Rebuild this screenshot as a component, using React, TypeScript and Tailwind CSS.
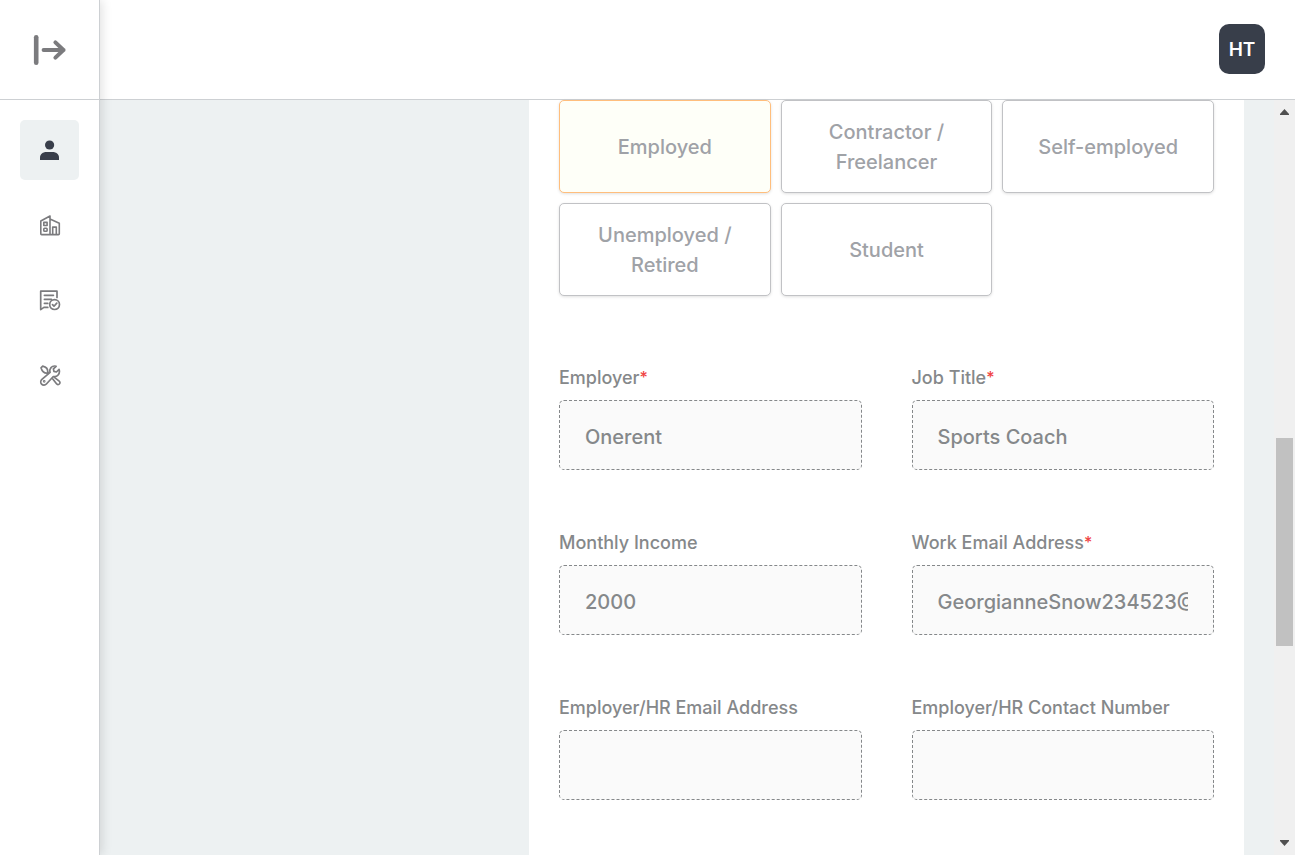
import { useState } from "react";
import type { ReactNode } from "react";

const statuses = ["Employed", "Contractor / Freelancer", "Self-employed", "Unemployed / Retired", "Student"];

const fields = [
  { id: "employer", label: "Employer", required: true, value: "Onerent", type: "text" },
  { id: "job-title", label: "Job Title", required: true, value: "Sports Coach", type: "text" },
  { id: "income", label: "Monthly Income", required: false, value: "2000", type: "text" },
  { id: "work-email", label: "Work Email Address", required: true, value: "GeorgianneSnow234523@", type: "text" },
  { id: "hr-email", label: "Employer/HR Email Address", required: false, value: "", type: "text" },
  { id: "hr-phone", label: "Employer/HR Contact Number", required: false, value: "", type: "tel" },
];

function ExpandIcon() {
  return (
    <svg width="34" height="32" viewBox="0 0 34 32" fill="none" stroke="#7b7b7e" strokeLinecap="round" strokeLinejoin="round" aria-hidden="true">
      <path d="M3.2 3.2v25.6" strokeWidth="4.6" />
      <path d="M10.6 16h20M22.4 8.4 30.4 16l-8 7.6" strokeWidth="4" />
    </svg>
  );
}

function PersonIcon() {
  return (
    <svg width="20" height="20" viewBox="0 0 20 20" fill="#383e4a" aria-hidden="true">
      <circle cx="9.6" cy="5" r="4.6" />
      <path d="M0 20v-2.5c0-3.5 3-5.6 6.3-5.6h6.4c3.3 0 6.3 2.1 6.3 5.6V20z" />
    </svg>
  );
}

function BuildingIcon() {
  return (
    <svg width="22" height="22" viewBox="0 0 22 22" fill="none" stroke="#7b7b7e" strokeWidth="1.6" strokeLinejoin="round" aria-hidden="true">
      <path d="M2.6 20.6a.8.8 0 0 1-.8-.8V7L11 2v18.6zM11 5l9.3 4.2v10.6a.8.8 0 0 1-.8.8H11" />
      <rect x="4.8" y="8.4" width="3.3" height="3.1" />
      <rect x="4.8" y="14.2" width="3.3" height="3.1" rx=".8" />
      <path d="M13.7 20.4v-7.3h3.6v7.3" />
    </svg>
  );
}

function ReceiptIcon() {
  return (
    <svg width="22" height="22" viewBox="0 0 22 22" fill="none" stroke="#7b7b7e" strokeWidth="1.7" strokeLinecap="round" strokeLinejoin="round" aria-hidden="true">
      <path d="M18 8.4V2.2H1.7v18.4L4.9 18.4h3.9" />
      <path d="M5.4 6.3h9M5.4 10.3h7M5.4 14.3h3.4" />
      <circle cx="15.6" cy="15.6" r="4.9" />
      <path d="m13.5 15.7 1.5 1.5 2.8-3.1" />
    </svg>
  );
}

function ToolsIcon() {
  return (
    <svg width="22" height="22" viewBox="0 0 22 22" fill="none" stroke="#7b7b7e" strokeWidth="1.7" strokeLinecap="round" strokeLinejoin="round" aria-hidden="true">
      <path d="M20.1 5.4 17.4 8l-2.5-.6-.5-2.5 2.7-2.6c-2.4-.8-5.1.4-6 2.8-.5 1.2-.3 2.3 0 3.3L2.9 15.4c-1.4 1.3-1.5 3.4-.3 4.7 1.3 1.4 3.5 1.3 4.8-.1l6.9-7.5c3.7 1 7.2-2.6 5.8-7.1z" />
      <path d="M8.6 9.8 8 9.2C5.4 9.3 3 7.1 2 3.8L3.7 2.2c3.3.8 5.2 3 5 5.6l.5.6M13.6 14.8l3.9 5c.8 1 2.1 1 2.9.2s.8-2-.2-2.8l-4.8-3.8" />
      <circle cx="5.2" cy="17.3" r=".5" />
    </svg>
  );
}

const navItems: { label: string; icon: ReactNode }[] = [
  { label: "Profile", icon: <PersonIcon /> },
  { label: "Properties", icon: <BuildingIcon /> },
  { label: "Applications", icon: <ReceiptIcon /> },
  { label: "Maintenance", icon: <ToolsIcon /> },
];

export default function App() {
  const [status, setStatus] = useState("Employed");

  return (
    <div className="flex h-screen overflow-hidden bg-white font-['Inter','Liberation_Sans',sans-serif]">
      <aside className="relative z-10 flex w-[100px] shrink-0 flex-col border-r border-[#cdd0d3] bg-white shadow-[2px_0_10px_rgba(0,0,0,0.12)]">
        <div className="flex h-[100px] items-center justify-center border-b border-[#cdd0d3]">
          <button type="button" aria-label="Expand menu">
            <ExpandIcon />
          </button>
        </div>
        <nav className="flex flex-col gap-[15px] p-5">
          {navItems.map((item, i) => (
            <a
              key={item.label}
              href="#"
              aria-label={item.label}
              className={`flex h-[60px] items-center justify-center rounded-[5px] ${i === 0 ? "bg-[#edf1f2]" : ""}`}
            >
              {item.icon}
            </a>
          ))}
        </nav>
      </aside>

      <div className="flex min-w-0 flex-1 flex-col">
        <header className="flex h-[100px] shrink-0 items-start justify-end border-b border-[#cdd0d3] px-[30px] pt-6">
          <button type="button" className="h-[50px] w-[46px] rounded-[10px] bg-[#383e4a] pt-0.5 text-[19px] font-semibold text-white">
            HT
          </button>
        </header>

        <div className="flex min-h-0 flex-1 bg-[#edf1f2]">
          <main className="ml-[429px] mr-[30px] min-w-0 flex-1 bg-white px-[30px]">
            <div className="grid grid-cols-3 gap-[10px]">
              {statuses.map((name) => (
                <button
                  key={name}
                  type="button"
                  aria-pressed={status === name}
                  onClick={() => setStatus(name)}
                  className={`h-[93px] rounded-[5px] border px-8 pt-px text-xl leading-[30px] font-medium text-[#9fa2a7] shadow-[0_1px_3px_rgba(0,0,0,0.12)] ${
                    status === name ? "border-[#ffbe7d] bg-[#fefff8]" : "border-[#c1c2c5] bg-white"
                  }`}
                >
                  {name}
                </button>
              ))}
            </div>

            <form className="mt-[69px] grid grid-cols-2 gap-x-[50px] gap-y-[60px]">
              {fields.map((field) => (
                <div key={field.id} className="flex min-w-0 flex-col gap-[10px]">
                  <label htmlFor={field.id} className="h-[25px] text-lg leading-[25px] font-medium whitespace-nowrap text-[#85888a]">
                    {field.label}
                    {field.required && <span className="align-text-top text-base leading-5 text-[#f04444]">*</span>}
                  </label>
                  <input
                    id={field.id}
                    type={field.type}
                    defaultValue={field.value}
                    className="h-[70px] w-full rounded-[5px] border border-dashed border-[#85888a] bg-[#fafafa] px-[25px] pt-1 text-xl font-medium text-[#85888a] outline-none"
                  />
                </div>
              ))}
            </form>
          </main>

          <div className="flex w-[21px] shrink-0 flex-col items-center bg-[#f0f0f0] py-[9px]" aria-hidden="true">
            <svg width="9" height="6" viewBox="0 0 9 6" fill="#505050">
              <path d="M4.5 0 9 5v1H0V5z" />
            </svg>
            <div className="flex w-full flex-1 flex-col px-[2px]">
              <div className="grow-[323]" />
              <div className="grow-[208] bg-[#c1c1c1]" />
              <div className="grow-[194]" />
            </div>
            <svg width="9" height="6" viewBox="0 0 9 6" fill="#505050">
              <path d="M4.5 6 0 1V0h9v1z" />
            </svg>
          </div>
        </div>
      </div>
    </div>
  );
}
